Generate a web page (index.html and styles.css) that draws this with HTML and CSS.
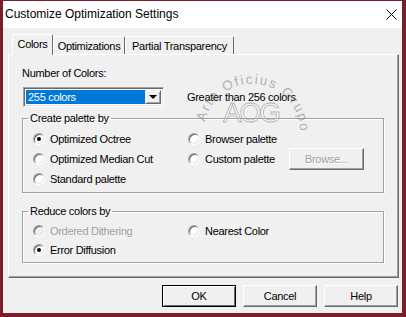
FILE: index.html
```html
<!DOCTYPE html>
<html lang="en">
<head>
    <meta charset="UTF-8">
    <title>Customize Optimization Settings</title>
    <link rel="stylesheet" href="styles.css">
</head>
<body>
    <div class="window">
        <div class="titlebar">
            <span class="title">Customize Optimization Settings</span>
            <svg class="close" width="11" height="11" viewBox="0 0 11 11">
                <path d="M0.5 0.5 L10.5 10.5 M10.5 0.5 L0.5 10.5" stroke="#000" stroke-width="1"/>
            </svg>
        </div>

        <div class="client">
            <div class="tabs">
                <div class="tab active tab-colors">Colors</div>
                <div class="tab tab-opt">Optimizations</div>
                <div class="tab tab-partial">Partial Transparency</div>
            </div>

            <div class="panel">
                <div class="field-label">Number of Colors:</div>
                <div class="select-row">
                    <div class="select">
                        <span class="select-value">255 colors</span>
                        <span class="select-btn"><span class="down-arrow"></span></span>
                    </div>
                    <span class="select-note">Greater than 256 colors</span>
                </div>

                <fieldset class="group group-palette">
                    <legend>Create palette by</legend>
                    <div class="palette-grid">
                        <label class="radio"><span class="dot checked"></span>Optimized Octree</label>
                        <label class="radio"><span class="dot"></span>Browser palette</label>
                        <span></span>
                        <label class="radio"><span class="dot"></span>Optimized Median Cut</label>
                        <label class="radio"><span class="dot"></span>Custom palette</label>
                        <button class="btn disabled">Browse...</button>
                        <label class="radio"><span class="dot"></span>Standard palette</label>
                    </div>
                </fieldset>

                <fieldset class="group group-reduce">
                    <legend>Reduce colors by</legend>
                    <div class="reduce-grid">
                        <label class="radio disabled"><span class="dot"></span>Ordered Dithering</label>
                        <label class="radio"><span class="dot"></span>Nearest Color</label>
                        <label class="radio"><span class="dot checked"></span>Error Diffusion</label>
                    </div>
                </fieldset>
            </div>

            <div class="buttons">
                <button class="btn default">OK</button>
                <button class="btn">Cancel</button>
                <button class="btn">Help</button>
            </div>

            <!-- watermark stamped over the dialog -->
            <svg class="watermark" width="140" height="80" viewBox="0 0 140 80">
                <path id="arc" d="M25,52 A48,48 0 0,1 120,62" fill="none"/>
                <text class="wm-arc"><textPath href="#arc" textLength="140">Arte Oficius Grupo</textPath></text>
                <text class="wm-big" x="43" y="52" textLength="58">AOG</text>
            </svg>
        </div>
    </div>
</body>
</html>
```

FILE: styles.css
```css
body {
    margin: 0;
    background-color: #7b1d2b;
    font-family: "Liberation Sans", Arial, sans-serif;
    font-size: 11px;
    letter-spacing: -0.3px;
    color: #000;
}

.window {
    margin: 1px 4px 0 3px;
    height: 312px;
    display: flex;
    flex-direction: column;
}

.titlebar {
    height: 27px;
    background-color: #fff;
    display: flex;
    align-items: center;
    justify-content: space-between;
    padding-left: 2px;
}

.title {
    font-size: 12px;
    letter-spacing: 0;
    margin-top: -1px;
}

.close {
    margin-right: 5px;
}

.client {
    flex: 1;
    background-color: #f0f0f0;
    padding: 6px 3px 0 5px;
    position: relative;
}

.tabs {
    display: flex;
    align-items: flex-end;
    height: 20px;
    padding-left: 4px;
}

.tab {
    box-sizing: border-box;
    height: 18px;
    border-top: 1px solid #fff;
    border-left: 1px solid #fff;
    border-right: 1px solid #696969;
    border-radius: 2px 2px 0 0;
    display: flex;
    align-items: center;
    justify-content: center;
    padding-top: 1px;
}

.tab.active {
    height: 21px;
    margin-bottom: -1px;
    background-color: #f0f0f0;
    position: relative;
    z-index: 1;
    padding-top: 0;
    padding-bottom: 2px;
}

.tab-colors { width: 41px; }
.tab-opt { width: 72px; }
.tab-partial { width: 109px; }

.panel {
    box-sizing: border-box;
    height: 224px;
    border: 1px solid;
    border-color: #fff #696969 #696969 #fff;
    box-shadow: inset -1px -1px #a0a0a0;
    padding: 12px 0 0 13px;
}

.field-label {
    line-height: 13px;
}

.select-row {
    display: flex;
    align-items: center;
    margin-top: 7px;
}

.select {
    box-sizing: border-box;
    width: 141px;
    height: 20px;
    margin-left: 1px;
    border: 1px solid;
    border-color: #a0a0a0 #fff #fff #a0a0a0;
    box-shadow: inset 1px 1px #696969, inset -1px -1px #e3e3e3;
    background-color: #fff;
    display: flex;
    padding: 2px;
}

.select-value {
    flex: 1;
    background-color: #0078d7;
    color: #fff;
    line-height: 14px;
    padding-left: 2px;
}

.select-btn {
    box-sizing: border-box;
    width: 16px;
    border: 1px solid;
    border-color: #f0f0f0 #696969 #696969 #f0f0f0;
    box-shadow: inset 1px 1px #fff, inset -1px -1px #a0a0a0;
    background-color: #f0f0f0;
    display: flex;
    align-items: center;
    justify-content: center;
}

.down-arrow {
    width: 0;
    height: 0;
    border-left: 4px solid transparent;
    border-right: 4px solid transparent;
    border-top: 4px solid #000;
}

.select-note {
    margin-left: 23px;
}

.group {
    box-sizing: border-box;
    width: 362px;
    margin: 0;
    padding: 0 0 3px 10px;
    border: 1px solid #a0a0a0;
    box-shadow: inset 1px 1px #fff, 1px 1px #fff;
}

.group legend {
    line-height: 14px;
    padding: 0 2px;
    margin-left: -5px;
}

.group-palette {
    margin-top: 4px;
}

.group-reduce {
    margin-top: 11px;
}

.palette-grid {
    display: grid;
    grid-template-columns: 155px 101px 75px;
    grid-auto-rows: 20px;
    align-items: center;
    padding-top: 4px;
}

.reduce-grid {
    display: grid;
    grid-template-columns: 155px auto;
    grid-auto-rows: 19px;
    align-items: center;
    padding-top: 3px;
}

.radio {
    display: flex;
    align-items: center;
    gap: 5px;
}

.dot {
    box-sizing: border-box;
    width: 12px;
    height: 12px;
    border-radius: 50%;
    border: 1px solid;
    border-color: #a0a0a0 #fff #fff #a0a0a0;
    box-shadow: inset 1px 1px #696969, inset -1px -1px #e3e3e3;
    background-color: #fff;
    display: flex;
    align-items: center;
    justify-content: center;
}

.dot.checked::after {
    content: "";
    width: 4px;
    height: 4px;
    border-radius: 50%;
    background-color: #000;
}

.radio.disabled {
    color: #a0a0a0;
}

.radio.disabled .dot {
    background-color: #f0f0f0;
}

.btn {
    box-sizing: border-box;
    width: 75px;
    height: 22px;
    padding: 0;
    font-family: inherit;
    font-size: 11px;
    letter-spacing: -0.3px;
    color: #000;
    background-color: #f0f0f0;
    border: 1px solid;
    border-color: #fff #696969 #696969 #fff;
    box-shadow: inset -1px -1px #a0a0a0;
}

.btn.disabled {
    color: #a0a0a0;
    text-shadow: 1px 1px #fff;
}

.btn.default {
    border-color: #000;
    box-shadow: inset 1px 1px #fff, inset -1px -1px #696969;
}

.buttons {
    display: flex;
    justify-content: flex-end;
    gap: 7px;
    margin-top: 7px;
    margin-right: 1px;
}

.buttons .btn {
    width: 74px;
}

.watermark {
    position: absolute;
    left: 177px;
    top: 42px;
    pointer-events: none;
}

.wm-arc {
    font-size: 13.5px;
    letter-spacing: 0;
    fill: rgba(110, 110, 110, 0.5);
}

.wm-big {
    font-size: 28px;
    letter-spacing: 0;
    fill: rgba(255, 255, 255, 0.35);
    stroke: rgba(120, 120, 120, 0.55);
    stroke-width: 0.8;
}
```
